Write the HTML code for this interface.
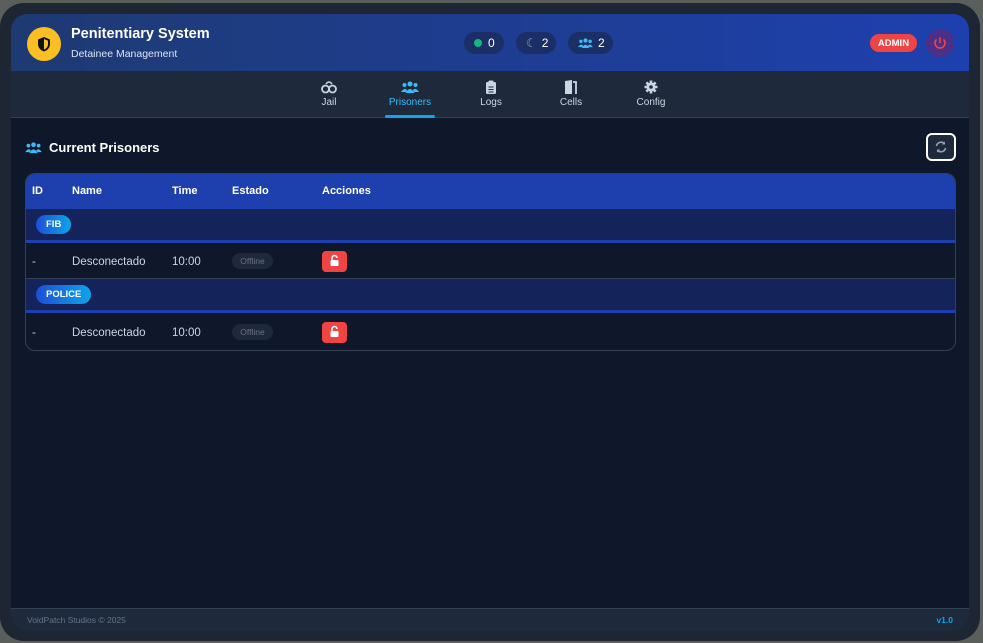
<!DOCTYPE html>
<html><head><style>
*{box-sizing:border-box;margin:0;padding:0}
body{width:983px;height:643px;background:#5a5f5c;font-family:"Liberation Sans",sans-serif;position:relative;overflow:hidden}
.frame{position:absolute;left:0;top:3px;width:980px;height:638px;background:#1f2633;border-radius:24px}
.panel{position:absolute;left:11px;top:14px;width:958px;height:617px;background:#0f172a;border-radius:16px;overflow:hidden}
.hdr{position:absolute;left:0;top:0;width:958px;height:57px;background:linear-gradient(90deg,#1e3a72,#1e40af)}
.logo{position:absolute;left:16px;top:13px;width:34px;height:34px;border-radius:50%;background:#fbbf24}
.t1{position:absolute;left:60px;top:12px;color:#fff;font-weight:bold;font-size:14.5px}
.t2{position:absolute;left:60px;top:34px;color:#dbe4f5;font-size:10.5px}
.pill{position:absolute;top:18px;height:22px;border-radius:11px;background:#1b2f66;color:#fff;font-size:12px;line-height:22px;padding-left:10px}
.admin{position:absolute;left:859px;top:20px;width:47px;height:18px;border-radius:9px;background:#ef4444;color:#fff;font-weight:bold;font-size:9.5px;text-align:center;line-height:19px;padding-top:0}
.pow{position:absolute;left:915px;top:15px;width:28px;height:28px;border-radius:50%;background:#4c2f86}
.nav{position:absolute;left:0;top:57px;width:958px;height:47px;background:#1e293b;border-bottom:1px solid #334155}
.tab{position:absolute;top:0;width:60px;text-align:center;color:#cbd5e1;font-size:10px}
.tab svg{display:block;margin:9px auto 3px}
.tab.act{color:#38bdf8}
.ul{position:absolute;left:374px;top:44px;width:50px;height:3px;background:#0ea5e9;border-radius:2px}
.h2{position:absolute;left:38px;top:126px;color:#fff;font-weight:bold;font-size:13px}
.ref{position:absolute;left:915px;top:119px;width:30px;height:28px;border:2px solid #fff;border-radius:6px;background:#1e293b}
.tbl{position:absolute;left:14px;top:159px;width:931px;height:178px;border:1px solid #334155;border-radius:10px;overflow:hidden}
.th{position:absolute;left:0;top:0;width:100%;height:35px;background:#1e40af;color:#fff;font-weight:bold;font-size:11px}
.th span{position:absolute;top:11px}
.row span{position:absolute;top:13px}
.grp{position:absolute;left:0;width:100%;height:34px;background:#14245a;border-bottom:3px solid #1e40af}
.badge{position:absolute;left:10px;top:6px;height:19px;border-radius:10px;background:linear-gradient(90deg,#1d4ed8,#0ea5e9);color:#fff;font-weight:bold;font-size:9.5px;line-height:19px;padding:0 10px}
.row{position:absolute;left:0;width:100%;height:36px;color:#cbd5e1;font-size:11.5px;border-bottom:1px solid #334155}
.off{position:absolute;left:206px;top:10px;width:41px;height:16px;border-radius:8px;background:#1e293b;color:#6b7280;font-size:8.5px;text-align:center;line-height:16px}
.lock{position:absolute;left:296px;top:8px;width:25px;height:21px;border-radius:4px;background:#ef4444}
.foot{position:absolute;left:0;top:594px;width:958px;height:23px;background:#1e293b;border-top:1px solid #334155;font-size:8.5px;line-height:22px}
</style></head><body>
<div class="frame"></div>
<div class="panel">
 <div class="hdr">
  <div class="logo"><svg width="34" height="34" viewBox="0 0 34 34"><path d="M17 10 L23 12.5 V17 C23 21 20 23.5 17 24.5 C14 23.5 11 21 11 17 V12.5 Z" fill="#111"/><path d="M17 12 L21 13.8 V17 C21 20 19 21.8 17 22.5 Z" fill="#fbbf24"/></svg></div>
  <div class="t1">Penitentiary System</div>
  <div class="t2">Detainee Management</div>
  <div class="pill" style="left:453px;width:40px"><span style="display:inline-block;width:8px;height:8px;border-radius:50%;background:#10b981;margin-right:6px"></span>0</div>
  <div class="pill" style="left:505px;width:40px"><span style="color:#94a3b8;margin-right:5px">☾</span>2</div>
  <div class="pill" style="left:557px;width:45px"><svg style="vertical-align:-2px;margin-right:5px" width="15" height="12" viewBox="0 0 18 14"><circle cx="9" cy="4" r="2.5" fill="#38bdf8"/><circle cx="3.5" cy="5" r="2" fill="#38bdf8"/><circle cx="14.5" cy="5" r="2" fill="#38bdf8"/><path d="M4.5 13 Q9 5 13.5 13Z M0 12 Q3.5 7 6 10 L5 12Z M18 12 Q14.5 7 12 10 L13 12Z" fill="#38bdf8"/></svg>2</div>
  <div class="admin">ADMIN</div>
  <div class="pow"><svg width="28" height="28" viewBox="0 0 28 28"><path d="M10.5 10.5 A5 5 0 1 0 17.5 10.5" stroke="#ef4444" stroke-width="1.6" fill="none"/><path d="M14 8.5 V14" stroke="#ef4444" stroke-width="1.6"/></svg></div>
 </div>
 <div class="nav">
  <div class="tab" style="left:288px"><svg width="16" height="14" viewBox="0 0 16 14"><circle cx="4.5" cy="9" r="3.5" stroke="#cbd5e1" stroke-width="1.8" fill="none"/><circle cx="11.5" cy="9" r="3.5" stroke="#cbd5e1" stroke-width="1.8" fill="none"/><path d="M5 4 Q8 0 11 4" stroke="#cbd5e1" stroke-width="1.5" fill="none"/></svg>Jail</div>
  <div class="tab act" style="left:369px"><svg width="18" height="14" viewBox="0 0 18 14"><circle cx="9" cy="4" r="2.5" fill="#38bdf8"/><circle cx="3.5" cy="5" r="2" fill="#38bdf8"/><circle cx="14.5" cy="5" r="2" fill="#38bdf8"/><path d="M4.5 13 Q9 5 13.5 13Z M0 12 Q3.5 7 6 10 L5 12Z M18 12 Q14.5 7 12 10 L13 12Z" fill="#38bdf8"/></svg>Prisoners</div>
  <div class="tab" style="left:450px"><svg width="12" height="14" viewBox="0 0 12 14"><rect x="1" y="2" width="10" height="12" rx="1.5" fill="#cbd5e1"/><rect x="3.5" y="0.5" width="5" height="3" rx="1" fill="#cbd5e1"/><path d="M3.5 7h5M3.5 9.5h5M3.5 12h5" stroke="#1e293b" stroke-width="1"/></svg>Logs</div>
  <div class="tab" style="left:530px"><svg width="16" height="14" viewBox="0 0 16 14"><path d="M2 1 L9 0 V14 H2Z" fill="#cbd5e1"/><path d="M10 2 H13 V14" stroke="#cbd5e1" stroke-width="1.8" fill="none"/></svg>Cells</div>
  <div class="tab" style="left:610px"><svg width="14" height="14" viewBox="0 0 14 14"><circle cx="7" cy="7" r="4.5" fill="#cbd5e1"/><path d="M7 0.5V13.5M0.5 7H13.5M2.4 2.4L11.6 11.6M11.6 2.4L2.4 11.6" stroke="#cbd5e1" stroke-width="2.6"/><circle cx="7" cy="7" r="1.8" fill="#1e293b"/></svg>Config</div>
  <div class="ul"></div>
 </div>
 <svg style="position:absolute;left:14px;top:127px" width="17" height="13" viewBox="0 0 18 14"><circle cx="9" cy="4" r="2.5" fill="#38bdf8"/><circle cx="3.5" cy="5" r="2" fill="#38bdf8"/><circle cx="14.5" cy="5" r="2" fill="#38bdf8"/><path d="M4.5 13 Q9 5 13.5 13Z M0 12 Q3.5 7 6 10 L5 12Z M18 12 Q14.5 7 12 10 L13 12Z" fill="#38bdf8"/></svg>
 <div class="h2">Current Prisoners</div>
 <div class="ref"><svg width="26" height="24" viewBox="0 0 26 24"><path d="M8.5 11 A4.5 4.5 0 0 1 16.5 9 M17.5 13 A4.5 4.5 0 0 1 9.5 15" stroke="#94a3b8" stroke-width="1.6" fill="none"/><path d="M17 6.5 V9.5 H14Z M9 17.5 V14.5 H12Z" fill="#94a3b8"/></svg></div>
 <div class="tbl">
  <div class="th"><span style="left:6px">ID</span><span style="left:46px">Name</span><span style="left:146px">Time</span><span style="left:206px">Estado</span><span style="left:296px">Acciones</span></div>
  <div class="grp" style="top:35px"><div class="badge">FIB</div></div>
  <div class="row" style="top:69px"><span style="left:6px">-</span><span style="left:46px">Desconectado</span><span style="left:146px">10:00</span><div class="off">Offline</div><div class="lock"><svg width="25" height="21" viewBox="0 0 25 21"><path d="M10 9 V7 A2.5 2.5 0 0 1 15 7" stroke="#fff" stroke-width="1.5" fill="none"/><rect x="8.5" y="9" width="8" height="6" rx="1" fill="#fff"/></svg></div></div>
  <div class="grp" style="top:105px"><div class="badge">POLICE</div></div>
  <div class="row" style="top:140px;border:none"><span style="left:6px">-</span><span style="left:46px">Desconectado</span><span style="left:146px">10:00</span><div class="off">Offline</div><div class="lock"><svg width="25" height="21" viewBox="0 0 25 21"><path d="M10 9 V7 A2.5 2.5 0 0 1 15 7" stroke="#fff" stroke-width="1.5" fill="none"/><rect x="8.5" y="9" width="8" height="6" rx="1" fill="#fff"/></svg></div></div>
 </div>
 <div class="foot"><span style="position:absolute;left:16px;color:#64748b">VoidPatch Studios © 2025</span><span style="position:absolute;right:16px;color:#0ea5e9;font-weight:bold">v1.0</span></div>
</div>
</body></html>
